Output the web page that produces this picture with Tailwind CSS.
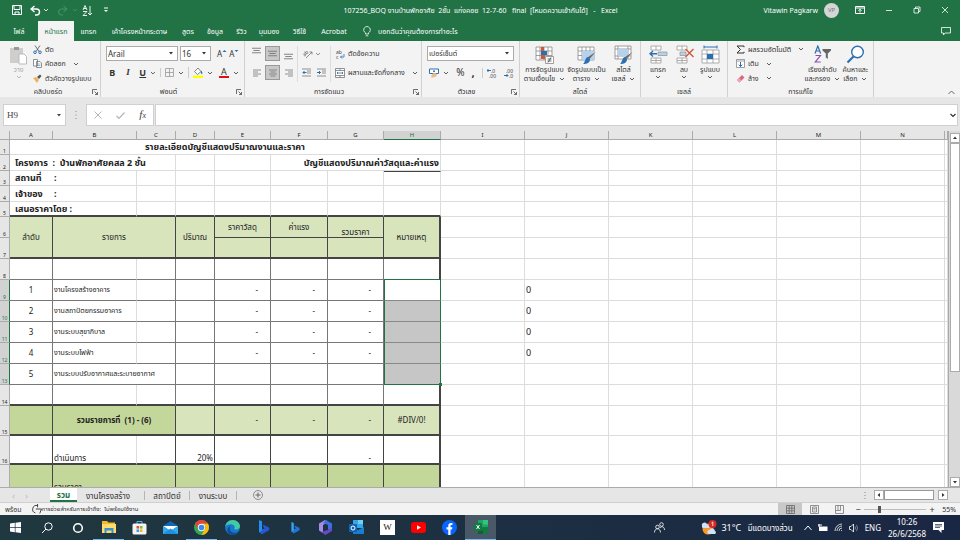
<!DOCTYPE html>
<html lang="th">

<head>
    <meta charset="UTF-8">
    <meta name="viewport" content="width=device-width, initial-scale=1.0">
    <title>107256_BOQ - Excel</title>
    <script src="https://cdn.jsdelivr.net/npm/@tailwindcss/browser@4"></script>
</head>

<body class="flex h-screen flex-col overflow-hidden bg-[#e6e6e6] font-['Noto_Sans','Noto_Sans_Thai',sans-serif] text-[7px] leading-[9px] text-[#333]">
    <!-- shared symbols -->
    <svg class="hidden">
        <symbol id="chev" viewBox="0 0 6 6"><path d="M1 2l2 2 2-2" fill="none" stroke="currentColor" stroke-width=".8" /></symbol>
        <symbol id="down" viewBox="0 0 6 6"><path d="M1 2h4L3 4.500z" fill="currentColor" /></symbol>
        <symbol id="launch" viewBox="0 0 6 6"><path d="M.5 5V.5H5M2.500 2.500l3 3M5.500 3v2.500H3" fill="none" stroke="currentColor" stroke-width=".7" /></symbol>
        <symbol id="lines" viewBox="0 0 10 10"><path d="M0 2.500h10M1.500 5h7M0 7.500h10" fill="none" stroke="currentColor" /></symbol>
        <symbol id="grid" viewBox="0 0 18 18"><path d="M1 2h16v13H1zM1 6h16M1 10.500h16M5 2v13M9 2v13M13 2v13" fill="#fff" stroke="#888" stroke-width=".8" /></symbol>
    </svg>

    <header class="bg-[#217346] text-white">
        <div class="flex h-5 items-center">
            <div class="flex flex-1 items-center gap-1 pl-3">
                <button aria-label="บันทึก"><svg class="size-[10px]" viewBox="0 0 10 10"><path d="M.5.500h9v9h-9zM2 .5v4h6v-4M3 9.500V7h4v2.500" fill="none" stroke="#fff" /></svg></button>
                <button class="ml-1 flex items-center gap-0.5" aria-label="เลิกทำ"><svg class="size-[11px]" viewBox="0 0 11 11"><path d="M4.500 1L1 4l3.500 3M1.500 4h5a3 3 0 010 6H5" fill="none" stroke="#fff" stroke-width="1.400" /></svg><svg class="size-[6px]"><use href="#chev" /></svg></button>
                <button class="ml-1 flex items-center gap-1 text-[#4f9270]" aria-label="ทำซ้ำ"><svg class="size-[11px]" viewBox="0 0 11 11"><path d="M6.500 1L10 4 6.500 7M9.500 4h-5a3 3 0 000 6H6" fill="none" stroke="currentColor" /></svg><svg class="size-[6px]"><use href="#chev" /></svg></button>
                <button class="flex items-center" aria-label="เรียงลำดับ"><svg class="size-[11px]" viewBox="0 0 11 11"><path d="M1 5l2-4.500L5 5M1.800 3.500h2.400M1 6.500h4l-4 4h4M8 1v9M6 8l2 2 2-2" fill="none" stroke="#fff" stroke-width=".9" /></svg></button>
                <button class="ml-1.5" aria-label="กำหนดเอง"><svg class="size-[6px]" viewBox="0 0 6 6"><path d="M1 1h4" stroke="#fff" /><path d="M1 3h4L3 5z" fill="#fff" /></svg></button>
            </div>
            <h1 class="whitespace-pre">107256_BOQ งานบ้านพักอาศัย  2ชั้น  แก่งคอย  12-7-60   final  [โหมดความเข้ากันได้]   -   Excel</h1>
            <div class="flex flex-1 items-center justify-end pr-[11px]">
                <span>Vitawin Pagkarw</span>
                <span class="ml-1.5 flex size-[15px] items-center justify-center rounded-full bg-[#d5d5d5] text-[6px] text-[#777]">VP</span>
                <button class="ml-4" aria-label="ตัวเลือกการแสดง Ribbon"><svg class="size-[10px]" viewBox="0 0 10 10"><path d="M.5 1.500h9v7h-9zM.5 3h9M5 7.500V4.300M3.500 5.700L5 4.200l1.500 1.500" fill="none" stroke="#fff" /></svg></button>
                <button class="ml-5" aria-label="ย่อ"><svg class="size-[8px]" viewBox="0 0 8 8"><path d="M1 4.500h6" stroke="#fff" stroke-width=".8" /></svg></button>
                <button class="ml-5" aria-label="คืนค่า"><svg class="size-[8px]" viewBox="0 0 8 8"><path d="M1 2.500h4.500V7H1zM2.500 2.500V1H7v4.500H5.500" fill="none" stroke="#fff" stroke-width=".8" /></svg></button>
                <button class="ml-5" aria-label="ปิด"><svg class="size-[8px]" viewBox="0 0 8 8"><path d="M1 1l6 6M7 1L1 7" stroke="#fff" stroke-width=".8" /></svg></button>
            </div>
        </div>
        <nav class="flex h-[21px] items-center pt-px">
            <a href="#" class="w-[38px] text-center">ไฟล์</a>
            <a href="#" class="flex h-full w-9 items-center justify-center bg-[#f3f3f3] text-[#217346]">หน้าแรก</a>
            <a href="#" class="w-[29px] text-center">แทรก</a>
            <a href="#" class="w-[73px] text-center">เค้าโครงหน้ากระดาษ</a>
            <a href="#" class="w-6 text-center">สูตร</a>
            <a href="#" class="w-[30px] text-center">ข้อมูล</a>
            <a href="#" class="w-[23px] text-center">รีวิว</a>
            <a href="#" class="w-8 text-center">มุมมอง</a>
            <a href="#" class="w-[29px] text-center">วิธีใช้</a>
            <a href="#" class="w-10 text-center">Acrobat</a>
            <a href="#" class="ml-2 flex items-center gap-1.5"><svg class="h-[11px] w-[10px]" viewBox="0 0 10 11"><path d="M3.500 8V6.800a3.300 3.300 0 113 0V8zM3.700 9.800h2.600" fill="none" stroke="#fff" stroke-width=".8" /></svg>บอกฉันว่าคุณต้องการทำอะไร</a>
            <button class="mr-[9px] ml-auto" aria-label="ข้อคิดเห็น"><svg class="size-[10px]" viewBox="0 0 10 10"><path d="M.5 1.500h9V7H4L2.500 9V7h-2z" fill="none" stroke="#fff" stroke-width=".8" /></svg></button>
        </nav>
    </header>

    <section class="flex h-14 bg-[#f3f3f3]">
        <!-- clipboard -->
        <div class="flex w-[101px] flex-col border-r border-[#d0d0d0]">
            <div class="flex flex-1 pt-px">
                <button class="flex w-[33px] flex-col items-center pl-1 text-[#aaa]">
                    <svg class="mt-1 h-[19px] w-[17px]" viewBox="0 0 17 19"><path d="M0 2h13v15H0z" fill="#d0cdcd" /><path d="M4 1h5v3H4z" fill="#999" /><path d="M9 8h5l2.500 2.500V18H9z" fill="#fff" stroke="#bbb" /></svg>
                    วาง
                    <svg class="size-[6px]"><use href="#chev" /></svg>
                </button>
                <div class="flex flex-col whitespace-nowrap">
                    <button class="flex h-[14px] items-center gap-[3px]"><svg class="size-[9px]" viewBox="0 0 9 9"><path d="M2 .5l4 6M7 .5l-4 6" stroke="#555" stroke-width=".8" /><circle cx="2" cy="7.300" r="1.300" fill="none" stroke="#2b6fb3" /><circle cx="7" cy="7.300" r="1.300" fill="none" stroke="#2b6fb3" /></svg>ตัด</button>
                    <button class="flex h-[15px] items-center gap-[3px]"><svg class="size-[9px]" viewBox="0 0 9 9"><path d="M.5.500h4V7h-4zM3.500 2.500H7l1.500 1.500v4.500h-5z" fill="#fff" stroke="#777" stroke-width=".8" /><path d="M4.500 5h3M4.500 6.500h3" stroke="#4a8bc9" stroke-width=".6" /></svg>คัดลอก<svg class="ml-1 size-[6px]"><use href="#chev" /></svg></button>
                    <button class="flex h-[14px] items-center gap-[3px]"><svg class="size-[9px]" viewBox="0 0 9 9"><path d="M0 4l3-1 3 3-2 3z" fill="#eeb362" /><path d="M4 3l3-2.500L8.500 2 6 5z" fill="#555" /></svg>ตัวคัดวางรูปแบบ</button>
                </div>
            </div>
            <div class="flex h-[11px] items-center"><span class="flex-1 pl-1 text-center">คลิปบอร์ด</span><svg class="mr-0.5 size-[6px]"><use href="#launch" /></svg></div>
        </div>
        <!-- font -->
        <div class="flex w-36 flex-col border-r border-[#d0d0d0]">
            <div class="flex flex-1 flex-col gap-1 px-[5px] pt-[5px]">
                <div class="flex h-[15px] items-center gap-0.5 text-[8px]">
                    <div class="relative"><select aria-label="ฟอนต์" class="h-[15px] w-[72px] appearance-none border border-[#ababab] bg-white pl-px"><option>Arail</option></select><svg class="absolute top-1 right-1 size-[6px]"><use href="#down" /></svg></div>
                    <div class="relative"><select aria-label="ขนาดฟอนต์" class="h-[15px] w-[31px] appearance-none border border-[#ababab] bg-white pl-px"><option>16</option></select><svg class="absolute top-1 right-1 size-[6px]"><use href="#down" /></svg></div>
                    <button class="ml-1 flex w-[12px]" aria-label="เพิ่มขนาดฟอนต์">A<svg class="size-[5px] text-[#2b6fb3]" viewBox="0 0 5 5"><path d="M.5 3l2-2 2 2z" fill="currentColor" /></svg></button>
                    <button class="flex w-[12px]" aria-label="ลดขนาดฟอนต์">A<svg class="size-[5px] text-[#2b6fb3]" viewBox="0 0 5 5"><path d="M.5 1h4l-2 2z" fill="currentColor" /></svg></button>
                </div>
                <div class="flex h-[15px] items-center text-[9px]">
                    <button class="w-[15px] pr-0.5 font-bold">B</button>
                    <button class="w-[15px] font-['Liberation_Serif'] font-bold italic">I</button>
                    <button class="w-[15px] font-bold underline">U</button>
                    <svg class="mr-1 size-[6px]"><use href="#chev" /></svg>
                    <button class="flex items-center gap-1 border-l border-[#ccc] pl-1" aria-label="เส้นขอบ"><svg class="size-[9px]" viewBox="0 0 9 9"><path d="M.5.500h8v8h-8zM4.500.500v8M.5 4.500h8" fill="none" stroke="#999" stroke-width=".8" /></svg><svg class="mr-1 size-[6px]"><use href="#chev" /></svg></button>
                    <button class="flex items-center gap-1 border-l border-[#ccc] pl-1" aria-label="สีเติม"><svg class="h-[11px] w-[10px]" viewBox="0 0 10 11"><path d="M1.500 4.500L5 1l3 3.500L4.500 7.500z" fill="#fff" stroke="#666" stroke-width=".8" /><path d="M8 3.500c2 2 1.500 3.500.8 3.500S7.500 6 8 3.500z" fill="#2b6fb3" /><path d="M0 8.500h10V11H0z" fill="#ff0" /></svg><svg class="size-[6px]"><use href="#chev" /></svg></button>
                    <button class="ml-1.5 flex items-center gap-1" aria-label="สีฟอนต์"><span class="w-[10px] border-b-2 border-[#e01010] text-center leading-[9px]">A</span><svg class="size-[6px]"><use href="#chev" /></svg></button>
                </div>
            </div>
            <div class="flex h-[11px] items-center"><span class="flex-1 text-center">ฟอนต์</span><svg class="mr-0.5 size-[6px]"><use href="#launch" /></svg></div>
        </div>
        <!-- alignment -->
        <div class="flex w-[177px] flex-col border-r border-[#d0d0d0]">
            <div class="flex flex-1 pt-[5px] text-[#777]">
                <div class="flex w-[52px] flex-col gap-1 pl-1">
                    <div class="flex gap-px">
                        <button class="flex size-[15px] items-start justify-center" aria-label="จัดชิดบน"><svg class="size-[9px]"><use href="#lines" /></svg></button>
                        <button class="flex size-[15px] items-center justify-center border border-[#999] bg-[#c8c8c8]" aria-label="จัดกึ่งกลางแนวตั้ง"><svg class="size-[9px]"><use href="#lines" /></svg></button>
                        <button class="flex size-[15px] items-end justify-center" aria-label="จัดชิดล่าง"><svg class="size-[9px]"><use href="#lines" /></svg></button>
                    </div>
                    <div class="flex gap-px">
                        <button class="flex size-[15px] items-center justify-center" aria-label="จัดชิดซ้าย"><svg class="size-[8px]" viewBox="0 0 8 8"><path d="M0 1h8M0 3h5M0 5h8M0 7h5" stroke="currentColor" stroke-width=".8" /></svg></button>
                        <button class="flex size-[15px] items-center justify-center border border-[#999] bg-[#c8c8c8]" aria-label="จัดกึ่งกลาง"><svg class="size-[8px]" viewBox="0 0 8 8"><path d="M0 1h8M1.500 3h5M0 5h8M1.500 7h5" stroke="currentColor" stroke-width=".8" /></svg></button>
                        <button class="flex size-[15px] items-center justify-center" aria-label="จัดชิดขวา"><svg class="size-[8px]" viewBox="0 0 8 8"><path d="M0 1h8M3 3h5M0 5h8M3 7h5" stroke="currentColor" stroke-width=".8" /></svg></button>
                    </div>
                </div>
                <div class="mb-1 flex w-[34px] flex-col gap-1 border-x border-[#ddd] pl-1">
                    <button class="flex h-[15px] items-center gap-0.5" aria-label="การวางแนว"><svg class="size-[11px]" viewBox="0 0 11 11"><path d="M4 10l6-6M10 6.500V4H7.500" fill="none" stroke="#777" stroke-width=".8" /><text x="1" y="7" font-size="5" fill="#444" transform="rotate(-45 4 6)">ab</text></svg><svg class="size-[6px]"><use href="#chev" /></svg></button>
                    <div class="flex h-[15px] items-center gap-1.5">
                        <button aria-label="ลดการเยื้อง"><svg class="size-[9px]" viewBox="0 0 9 9"><path d="M0 1h9M5 3h4M5 5h4M0 8h9" stroke="#777" stroke-width=".8" /><path d="M4.500 4.500H1M2.500 3L1 4.500 2.500 6" fill="none" stroke="#2b6fb3" /></svg></button>
                        <button aria-label="เพิ่มการเยื้อง"><svg class="size-[9px]" viewBox="0 0 9 9"><path d="M0 1h9M5 3h4M5 5h4M0 8h9" stroke="#777" stroke-width=".8" /><path d="M0 4.500h3.500M2 3l1.500 1.500L2 6" fill="none" stroke="#2b6fb3" /></svg></button>
                    </div>
                </div>
                <div class="flex flex-col gap-1 pl-1 whitespace-nowrap text-[#333]">
                    <button class="flex h-[15px] items-center gap-[3px]"><svg class="size-[10px]" viewBox="0 0 10 10"><text x="1" y="4.500" font-size="5" fill="#444">ab</text><text x="1" y="9.500" font-size="5" fill="#444">c</text><path d="M9 5v3H5.500M7 6.500L5.500 8 7 9.500" fill="none" stroke="#2b6fb3" stroke-width=".8" /></svg>ตัดข้อความ</button>
                    <button class="flex h-[15px] items-center gap-[3px]"><svg class="size-[10px]" viewBox="0 0 10 10"><path d="M.5.500h9v9h-9zM.5 2.500h9M.5 7.500h9M5 .5v2M5 7.500v2" fill="#fff" stroke="#777" stroke-width=".8" /><path d="M2 5h6M3 4L2 5l1 1M7 4l1 1-1 1" fill="none" stroke="#2b6fb3" stroke-width=".8" /></svg>ผสานและจัดกึ่งกลาง<svg class="ml-1 size-[6px]"><use href="#chev" /></svg></button>
                </div>
            </div>
            <div class="flex h-[11px] items-center"><span class="flex-1 text-center">การจัดแนว</span><svg class="mr-0.5 size-[6px]"><use href="#launch" /></svg></div>
        </div>
        <!-- number -->
        <div class="flex w-[98px] flex-col border-r border-[#d0d0d0]">
            <div class="flex flex-1 flex-col gap-1 px-[5px] pt-[5px]">
                <div class="relative"><select aria-label="รูปแบบตัวเลข" class="h-[15px] w-full appearance-none border border-[#ababab] bg-white pl-px"><option>เปอร์เซ็นต์</option></select><svg class="absolute top-1 right-1 size-[6px]"><use href="#down" /></svg></div>
                <div class="flex h-[15px] items-center justify-between">
                    <button class="flex items-center gap-1 pl-0.5" aria-label="สกุลเงิน"><svg class="size-[10px]" viewBox="0 0 10 10"><path d="M.5 1h9v4.500h-9z" fill="#fff" stroke="#2b6fb3" /><circle cx="5" cy="3.300" r="1" fill="#2b6fb3" /><path d="M3 6c2-2 5-1 5 .500S6 10 2 9.500z" fill="#e9bd8b" /></svg><svg class="size-[6px]"><use href="#chev" /></svg></button>
                    <button class="text-[10px]">%</button>
                    <button class="text-[11px] font-bold">,</button>
                    <button class="border-l border-[#ccc] pl-1" aria-label="เพิ่มตำแหน่งทศนิยม"><svg class="size-[10px]" viewBox="0 0 10 10"><path d="M4 2.500H0M1.500 1L0 2.500 1.500 4" fill="none" stroke="#2b6fb3" /><text x="4" y="4.500" font-size="5" fill="#444">.0</text><text x="2" y="9.500" font-size="5" fill="#444">.00</text></svg></button>
                    <button aria-label="ลดตำแหน่งทศนิยม"><svg class="size-[10px]" viewBox="0 0 10 10"><path d="M0 7.500h4M2.500 6L4 7.500 2.500 9" fill="none" stroke="#2b6fb3" /><text x="2" y="4.500" font-size="5" fill="#444">.00</text><text x="5" y="9.500" font-size="5" fill="#444">.0</text></svg></button>
                </div>
            </div>
            <div class="flex h-[11px] items-center"><span class="flex-1 text-center">ตัวเลข</span><svg class="mr-0.5 size-[6px]"><use href="#launch" /></svg></div>
        </div>
        <!-- styles -->
        <div class="flex w-[121px] flex-col border-r border-[#d0d0d0]">
            <div class="flex flex-1 items-start justify-end pt-1">
                <button class="w-[43px] text-center whitespace-nowrap"><svg class="mx-auto h-5 w-[19px]" viewBox="0 0 19 20"><use href="#grid" width="18" height="18" /><path d="M6 2h3v4H6zM6 10h4v4H6z" fill="#d0563a" /><path d="M6 6h6v4H6z" fill="#2b6fb3" /><path d="M10.500 11.500h8v7h-8z" fill="#fff" stroke="#888" stroke-width=".8" /><path d="M12.500 14h4M12.500 16h4M16 12.500l-3 5" stroke="#333" stroke-width=".7" /></svg>การจัดรูปแบบ<br><span class="flex items-center justify-center gap-1">ตามเงื่อนไข<svg class="size-[6px]"><use href="#chev" /></svg></span></button>
                <button class="w-[41px] text-center whitespace-nowrap"><svg class="mx-auto h-5 w-[19px]" viewBox="0 0 19 20"><use href="#grid" width="18" height="18" /><path d="M5 6h12v9H5z" fill="#b5d1ec" /><path d="M18.500 7l-6 7-2-1.500z" fill="#666" /><path d="M10.500 12l2.500 2c0 4-3 5-7 5 2-1 2-6 4.500-7z" fill="#2b6fb3" /></svg>จัดรูปแบบเป็น<br><span class="flex items-center justify-center gap-1">ตาราง<svg class="size-[6px]"><use href="#chev" /></svg></span></button>
                <button class="w-[33px] text-center whitespace-nowrap"><svg class="mx-auto h-5 w-[19px]" viewBox="0 0 19 20"><path d="M1 1h16v13H1zM1 4h16M1 11h16M4 1v13M14 1v13" fill="#fff" stroke="#888" stroke-width=".8" /><path d="M4 4h10v7H4z" fill="#b5d1ec" /><path d="M18.500 7l-6 7-2-1.500z" fill="#666" /><path d="M10.500 12l2.500 2c0 4-3 5-7 5 2-1 2-6 4.500-7z" fill="#2b6fb3" /></svg>สไตล์<br><span class="flex items-center justify-center gap-1">เซลล์<svg class="size-[6px]"><use href="#chev" /></svg></span></button>
            </div>
            <span class="h-[11px] text-center leading-[11px]">สไตล์</span>
        </div>
        <!-- cells -->
        <div class="flex w-[87px] flex-col border-r border-[#d0d0d0]">
            <div class="flex flex-1 items-start justify-center pt-1">
                <button class="w-[26px] text-center"><svg class="mx-auto h-5 w-[19px]" viewBox="0 0 19 20"><path d="M2 1h10v4H2zM7 1v4M2 13h10v5H2zM7 13v5M2 15.500h10" fill="#fff" stroke="#999" stroke-width=".8" /><path d="M9 7h9v3.500H9z" fill="#b5d1ec" stroke="#999" stroke-width=".8" /><path d="M8 8.700H1M4 6L1 8.700l3 2.700" fill="none" stroke="#2b6fb3" stroke-width="1.400" /></svg>แทรก<svg class="mx-auto size-[6px]"><use href="#chev" /></svg></button>
                <button class="w-[26px] text-center"><svg class="mx-auto h-5 w-[19px]" viewBox="0 0 19 20"><path d="M2 1h10v4H2zM7 1v4M2 13h10v5H2zM7 13v5M2 15.500h10" fill="#fff" stroke="#999" stroke-width=".8" /><path d="M5 7h6v3.500H5z" fill="#b5d1ec" stroke="#999" stroke-width=".8" /><path d="M10.500 4l8 8M18.500 4l-8 8" stroke="#d0563a" stroke-width="1.400" /></svg>ลบ<svg class="mx-auto size-[6px]"><use href="#chev" /></svg></button>
                <button class="w-[26px] text-center whitespace-nowrap"><svg class="mx-auto h-5 w-[19px]" viewBox="0 0 19 20"><path d="M1 5h17v13H1zM1 9h17M1 14h17M6 5v13M12 5v13" fill="#fff" stroke="#999" stroke-width=".8" /><path d="M6 9h6v5H6z" fill="#2b6fb3" /><path d="M3 2h13M3 .5v3M16 .5v3" stroke="#2b6fb3" /></svg>รูปแบบ<svg class="mx-auto size-[6px]"><use href="#chev" /></svg></button>
            </div>
            <span class="h-[11px] text-center leading-[11px]">เซลล์</span>
        </div>
        <!-- editing -->
        <div class="flex w-[146px] flex-col border-r border-[#d0d0d0]">
            <div class="flex flex-1 items-start justify-between pr-1 pl-2">
                <div class="flex flex-col pt-px whitespace-nowrap">
                    <button class="flex h-[14px] items-center gap-[3px]"><svg class="size-[9px]" viewBox="0 0 9 9"><path d="M8 2.200V1H1l3.500 3.500L1 8h7V6.800" fill="none" stroke="#333" /></svg>ผลรวมอัตโนมัติ<svg class="ml-1 size-[6px]"><use href="#chev" /></svg></button>
                    <button class="flex h-[15px] items-center gap-[3px]"><svg class="size-[9px]" viewBox="0 0 9 9"><path d="M.5.500h8v8h-8zM.5 2h8" fill="#fff" stroke="#888" stroke-width=".8" /><path d="M4.500 3v4.500M2.700 5.700l1.800 1.800 1.800-1.800" fill="none" stroke="#2b6fb3" /></svg>เติม<svg class="ml-1 size-[6px]"><use href="#chev" /></svg></button>
                    <button class="flex h-[14px] items-center gap-[3px]"><svg class="size-[9px]" viewBox="0 0 9 9"><path d="M1 6l5-5 2.500 2.500-5 5z" fill="#e0657e" /><path d="M1 6l2-2 2.500 2.500-2 2z" fill="#f2a5b4" /></svg>ล้าง<svg class="ml-1 size-[6px]"><use href="#chev" /></svg></button>
                </div>
                <div class="flex pt-1">
                    <button class="w-9 text-center whitespace-nowrap"><svg class="mx-auto h-5 w-[19px]" viewBox="0 0 19 20"><path d="M2 8.500L4.800 1l2.800 7.500M3 6h3.600" fill="none" stroke="#2b6fb3" stroke-width="1.200" /><path d="M2.500 10.500h5L2.300 17h5.400" fill="none" stroke="#8a4db0" stroke-width="1.200" /><path d="M9.500 4H18v1.500l-3.200 3V14l-2-1.500v-4l-3.300-3z" fill="#666" /></svg>เรียงลำดับ<br><span class="flex items-center justify-center gap-1">และกรอง<svg class="size-[6px]"><use href="#chev" /></svg></span></button>
                    <button class="w-[30px] text-center whitespace-nowrap"><svg class="mx-auto h-5 w-[19px]" viewBox="0 0 19 20"><circle cx="11.500" cy="7" r="5.800" fill="#fff" stroke="#2b6fb3" stroke-width="1.400" /><path d="M7.500 11.500L1.500 17.500" stroke="#2b6fb3" stroke-width="2.200" /></svg>ค้นหาและ<br><span class="flex items-center justify-center gap-1">เลือก<svg class="size-[6px]"><use href="#chev" /></svg></span></button>
                </div>
            </div>
            <span class="h-[11px] text-center leading-[11px]">การแก้ไข</span>
        </div>
        <button class="mt-auto mr-[5px] mb-px ml-auto" aria-label="ยุบ Ribbon"><svg class="size-[7px]" viewBox="0 0 7 7"><path d="M.5 5l3-3 3 3" fill="none" stroke="#444" stroke-width=".8" /></svg></button>
    </section>

    <!-- formula bar -->
    <section class="flex h-[34px] items-start pt-[7px] pr-0.5 pl-[3px] text-[#444]">
        <div class="relative"><input aria-label="กล่องชื่อ" value="H9" class="h-[22px] w-[63px] border border-[#d0d0d0] bg-white pl-[3px] font-['Liberation_Serif'] text-[9px]"><svg class="absolute top-2 right-1 size-[6px]"><use href="#down" /></svg></div>
        <svg class="mx-[8px] h-[22px] w-1" viewBox="0 0 4 22"><path d="M1.500 7h1v1h-1zM1.500 10.500h1v1h-1zM1.500 14h1v1h-1z" fill="#888" /></svg>
        <div class="flex h-[22px] w-[68px] items-center justify-around border border-[#d0d0d0] bg-white">
            <button aria-label="ยกเลิก"><svg class="size-[8px]" viewBox="0 0 8 8"><path d="M.5.500l7 7M7.500.500l-7 7" stroke="#b5b5b5" /></svg></button>
            <button aria-label="ใส่"><svg class="size-[9px]" viewBox="0 0 9 9"><path d="M.5 5l2.500 2.500L8.500 1.500" fill="none" stroke="#b5b5b5" stroke-width="1.200" /></svg></button>
            <button class="font-['Liberation_Serif'] text-[11px] italic">f<span class="text-[8px]">x</span></button>
        </div>
        <div class="relative ml-px flex-1"><input aria-label="แถบสูตร" class="h-[22px] w-full border border-[#d0d0d0] bg-white px-1"><svg class="absolute top-2 right-0.5 size-[6px]" viewBox="0 0 6 6"><path d="M.5 2L3 4.500 5.500 2" fill="none" stroke="#333" stroke-width="1.200" /></svg></div>
    </section>

    <main class="flex min-h-0 flex-1">
        <div class="min-w-0 flex-1 overflow-hidden bg-white">
            <table class="w-full table-fixed border-separate border-spacing-0 text-[8px] leading-[10px] text-[#222]">
                <colgroup>
                    <col class="w-[10px]"><col class="w-[43px]"><col class="w-[84px]"><col class="w-[39px]"><col class="w-[39px]"><col class="w-[56px]"><col class="w-[57px]"><col class="w-14"><col class="w-[57px]">
                    <col class="w-[84px]"><col class="w-[84px]"><col class="w-[84px]"><col class="w-[84px]"><col class="w-[84px]"><col class="w-[84px]"><col>
                </colgroup>
                <thead id="columns"></thead>
                <tbody id="rows"></tbody>
            </table>
        </div>
        <div class="flex w-3 flex-col items-center border-l border-[#aaa] bg-[#d9d9d9] pt-0.5">
            <button class="flex size-[10px] shrink-0 items-center justify-center border border-[#ababab] bg-white" aria-label="เลื่อนขึ้น"><svg class="size-[6px] rotate-180"><use href="#down" /></svg></button>
            <div class="h-[229px] w-[10px] border border-[#ababab] bg-white"></div>
            <button class="mt-auto flex size-[10px] shrink-0 items-center justify-center border border-[#ababab] bg-white" aria-label="เลื่อนลง"><svg class="size-[6px]"><use href="#down" /></svg></button>
        </div>
    </main>

    <!-- sheet tabs -->
    <nav class="flex h-[15px] items-center border-t border-[#ababab] pr-3 text-[8px]">
        <button class="w-[19px] pl-2 text-[#b5b5b5]" aria-label="แผ่นงานก่อนหน้า">‹</button>
        <button class="mr-4 w-[15px] text-[#b5b5b5]" aria-label="แผ่นงานถัดไป">›</button>
        <a href="#" class="flex h-full w-[27px] items-center justify-center border-b-2 border-[#217346] bg-white font-bold text-[#217346]">รวม</a>
        <a href="#" class="w-[68px] border-r border-[#b5b5b5] pl-[9px]">งานโครงสร้าง</a>
        <a href="#" class="w-[45px] border-r border-[#b5b5b5] text-center">สถาปัตย์</a>
        <a href="#" class="w-[47px] border-r border-[#b5b5b5] text-center">งานระบบ</a>
        <button class="ml-4" aria-label="แผ่นงานใหม่"><svg class="size-[10px]" viewBox="0 0 10 10"><path d="M5 2.500v5M2.500 5h5" stroke="#666" /><circle cx="5" cy="5" r="4.500" fill="none" stroke="#777" stroke-width=".8" /></svg></button>
        <svg class="mr-[7px] ml-auto h-[9px] w-1" viewBox="0 0 4 9"><path d="M1.500 1h1v1h-1zM1.500 4h1v1h-1zM1.500 7h1v1h-1z" fill="#888" /></svg>
        <button class="flex size-[10px] items-center justify-center border border-[#ababab] bg-white" aria-label="เลื่อนซ้าย"><svg class="size-[6px] rotate-90"><use href="#down" /></svg></button>
        <div class="h-[10px] w-[50px] border border-[#999] bg-white"></div>
        <button class="ml-1 flex size-[10px] items-center justify-center border border-[#ababab] bg-white" aria-label="เลื่อนขวา"><svg class="size-[6px] -rotate-90"><use href="#down" /></svg></button>
    </nav>

    <!-- status bar -->
    <section class="flex h-[13px] items-center border-t border-[#d0d0d0] bg-[#f3f3f3] pr-1 pl-[5px]">
        <span>พร้อม</span>
        <svg class="ml-2.5 size-[10px]" viewBox="0 0 9 9"><path d="M5 1.500A3.300 3.300 0 103 8M5 0v3M3.500 4.500h5L7 8.500" fill="none" stroke="#444" stroke-width=".9" /></svg>
        <span class="text-[6px]">การช่วยสำหรับการเข้าถึง:&nbsp; ไม่พร้อมใช้งาน</span>
        <button class="ml-auto flex h-full w-6 items-center justify-center bg-[#c8c8c8]" aria-label="ปกติ"><svg class="size-[9px]" viewBox="0 0 9 9"><path d="M.5.500h8v8h-8zM.5 3.200h8M.5 5.800h8M3.200.500v8M5.800.500v8" fill="none" stroke="#666" stroke-width=".8" /></svg></button>
        <button class="flex w-[25px] justify-center" aria-label="เค้าโครงหน้ากระดาษ"><svg class="size-[9px]" viewBox="0 0 9 9"><path d="M.5.500h8v8h-8zM2.500 2h4v5h-4zM3.500 3.500h2M3.500 5h2" fill="none" stroke="#777" stroke-width=".8" /></svg></button>
        <button class="flex w-[25px] justify-center" aria-label="แสดงตัวอย่างตัวแบ่งหน้า"><svg class="size-[9px]" viewBox="0 0 9 9"><path d="M.5.500h8v8h-8zM.5 5.500h5v-5M3 .5v5" fill="none" stroke="#777" stroke-width=".8" /></svg></button>
        <button class="w-[12px] text-[9px]">−</button>
        <input type="range" min="10" max="200" value="55" aria-label="ย่อ/ขยาย" class="h-[9px] w-[62px] appearance-none bg-linear-to-b from-transparent from-45% via-[#888] via-45% to-transparent to-55% [&::-webkit-slider-thumb]:h-[7px] [&::-webkit-slider-thumb]:w-[3px] [&::-webkit-slider-thumb]:appearance-none [&::-webkit-slider-thumb]:bg-[#555]">
        <button class="w-[12px] text-[9px]">+</button>
        <span class="ml-1">55%</span>
    </section>

    <!-- taskbar -->
    <footer class="flex h-[25px] items-center bg-linear-to-r from-[#20383f] to-[#1a2744] text-[8px] text-white">
        <button class="flex h-full w-[31px] items-center justify-center" aria-label="Start"><svg class="size-[11px]" viewBox="0 0 11 11"><path d="M0 1.500L4.800.800V5.200H0zM5.500.700L11 0v5.200H5.500zM0 5.900h4.800v4.400L0 9.600zM5.500 5.900H11V11l-5.500-.7z" fill="#fff" /></svg></button>
        <button class="flex h-full w-[31px] items-center justify-center" aria-label="Search"><svg class="size-[12px]" viewBox="0 0 12 12"><circle cx="7.500" cy="4.500" r="3.700" fill="none" stroke="#fff" /><path d="M5 7L1 11" stroke="#fff" /></svg></button>
        <button class="flex h-full w-[31px] items-center justify-center" aria-label="Cortana"><svg class="size-[12px]" viewBox="0 0 12 12"><circle cx="6" cy="6" r="4.300" fill="none" stroke="#fff" stroke-width="1.600" /></svg></button>
        <button class="flex h-full w-[31px] items-center justify-center border-b border-[#7ab8ee]" aria-label="File Explorer"><svg class="size-[14px]" viewBox="0 0 14 14"><path d="M0 1h5l1.500 1.500H13V13H0z" fill="#f3b92e" /><path d="M0 4h14v9H0z" fill="#ffdc6b" /><path d="M2.500 8h9v5h-2v-2.500h-5V13h-2z" fill="#3c8fd0" /></svg></button>
        <button class="flex h-full w-[31px] items-center justify-center" aria-label="Microsoft Store"><svg class="size-[15px]" viewBox="0 0 15 15"><path d="M5 4V1.500h5V4" fill="none" stroke="#55b6ee" /><rect x=".5" y="3.500" width="14" height="11" rx="1.500" fill="#f4f4f4" /><path d="M4.500 6h2.600v2.600H4.500z" fill="#e8502f" /><path d="M7.900 6h2.600v2.600H7.900z" fill="#80b93c" /><path d="M4.500 9.400h2.600V12H4.500z" fill="#2ba4e8" /><path d="M7.900 9.400h2.600V12H7.900z" fill="#f8b916" /></svg></button>
        <button class="flex h-full w-[31px] items-center justify-center" aria-label="Mail"><svg class="size-[15px]" viewBox="0 0 15 15"><path d="M0 6l7.500-5L15 6v8H0z" fill="#1067b5" /><path d="M0 6h15l-7.500 5z" fill="#fff" /><path d="M0 6l7.500 5L15 6v8H0z" fill="#31aaf0" /><path d="M0 14l7.500-5.500L15 14z" fill="#1e8fe0" /></svg></button>
        <button class="flex h-full w-[31px] items-center justify-center border-b border-[#7ab8ee]" aria-label="Chrome"><svg class="size-[15px]" viewBox="0 0 16 16"><circle cx="8" cy="8" r="8" fill="#34a853" /><path d="M1.100 4A8 8 0 0114.900 4H8a4 4 0 00-3.500 6z" fill="#ea4335" /><path d="M14.900 4A8 8 0 018 16l3.500-6A4 4 0 008 4z" fill="#fbbc05" /><circle cx="8" cy="8" r="3.900" fill="#fff" /><circle cx="8" cy="8" r="3" fill="#4285f4" /></svg></button>
        <button class="flex h-full w-[31px] items-center justify-center" aria-label="Edge"><svg class="size-[15px]" viewBox="0 0 16 16"><circle cx="8" cy="8" r="8" fill="#1678cf" /><path d="M.3 7C1 3 4 0 8 0c5 0 8 3.500 8 6.500 0 2.500-2 3.700-4 3.700-1.500 0-2.300-.6-2-1.200C11 7 9.500 4.500 6 4.500 3 4.500.8 6 .3 7z" fill="#45c9a2" /><path d="M6 6.500c-2.500 3 0 8 6 7a6.500 6.500 0 003-2c-2 4.500-8 6-11 3C1 11 3 7.500 6 6.500z" fill="#134c94" /></svg></button>
        <button class="flex h-full w-[31px] items-center justify-center" aria-label="Bing"><svg class="size-[15px]" viewBox="0 0 15 15"><path d="M3 0l3 1.200v8.500L12 7.500V10l-6 4-3-2z" fill="#2390ec" /><path d="M6.500 4.500L12.500 7a2.500 2.500 0 01.3 3.500L6 14l-2.500-2 5-3z" fill="#2756d6" /></svg></button>
        <button class="flex h-full w-[31px] items-center justify-center" aria-label="Bing Desktop"><svg class="size-[12px]" viewBox="0 0 15 15"><path d="M3 0l3 1.200v8.500L12 7.500V10l-6 4-3-2z" fill="#35a5ee" /><path d="M6.500 4.500L12.500 7a2.500 2.500 0 01.3 3.500L6 14l-2.500-2 5-3z" fill="#1d72dc" /></svg></button>
        <button class="flex h-full w-[31px] items-center justify-center" aria-label="Microsoft 365"><svg class="size-[15px]" viewBox="0 0 15 15"><path d="M7 0L1 3.500v7L5 13V5l5-3z" fill="#a58be8" /><path d="M8 0l6 3.500v5L10 10V5L5 3z" fill="#3f6ee0" /><path d="M14 8v3l-6.500 4L3 12l7-2z" fill="#6a48c4" /></svg></button>
        <button class="flex h-full w-[31px] items-center justify-center" aria-label="Outlook"><svg class="size-[15px]" viewBox="0 0 15 15"><path d="M4 0h10v8H4z" fill="#35a7ea" /><path d="M9 0h5v4H9z" fill="#6fd0f8" /><path d="M4 7l5 3 6-3v7H4z" fill="#1a7ed0" /><rect y="4" width="8" height="8" rx="1" fill="#0f62b4" /><circle cx="4" cy="8" r="2" fill="none" stroke="#fff" /></svg></button>
        <button class="flex h-full w-[31px] items-center justify-center" aria-label="Wikipedia"><span class="flex size-[15px] items-center justify-center bg-white font-['Liberation_Serif'] text-[9px] text-[#222]">W</span></button>
        <button class="flex h-full w-[31px] items-center justify-center" aria-label="YouTube"><svg class="h-[11px] w-[15px]" viewBox="0 0 15 11"><rect width="15" height="11" rx="3" fill="#f00" /><path d="M6 3.300l4 2.200-4 2.200z" fill="#fff" /></svg></button>
        <button class="flex h-full w-[31px] items-center justify-center" aria-label="Facebook"><svg class="size-[15px]" viewBox="0 0 15 15"><circle cx="7.500" cy="7.500" r="7.500" fill="#0866ff" /><path d="M6.300 15V9.500H4.500V7.200h1.800V5.800C6.300 3.800 7.400 3 9 3l1.400.1v2H9.500c-.8 0-1 .4-1 1v1.100h1.900L10 9.500H8.500V15z" fill="#fff" /></svg></button>
        <button class="flex h-full w-[31px] items-center justify-center border-b border-[#7ab8ee] bg-white/20" aria-label="Excel"><svg class="size-[14px]" viewBox="0 0 14 14"><path d="M4 0h10v14H4z" fill="#21a366" /><path d="M9 0h5v4.500H9z" fill="#33c481" /><path d="M4 7h10v7H4z" fill="#107c41" /><path d="M4 10h5v4H4z" fill="#185c37" /><rect y="3" width="8" height="8" rx="1" fill="#107c41" /><path d="M2.500 5l3 4M5.500 5l-3 4" stroke="#fff" /></svg></button>
        <div class="ml-auto flex h-full items-center">
            <svg class="mr-9 size-[11px]" viewBox="0 0 11 11"><circle cx="7.500" cy="2.500" r="1.800" fill="none" stroke="#fff" stroke-width=".8" /><circle cx="3.500" cy="5" r="1.800" fill="none" stroke="#fff" stroke-width=".8" /><path d="M.5 10.500c0-5 6-5 6 0M6 6c2-2.500 4.500-1 4.500 2" fill="none" stroke="#fff" stroke-width=".8" /></svg>
            <a href="#" class="flex items-center gap-1 text-[9px] text-white"><svg class="size-4" viewBox="0 0 16 16"><circle cx="7" cy="9" r="5.500" fill="#f7982b" /><path d="M1 6a2.500 2.500 0 015-1.500A2 2 0 018 8H2a1.500 1.500 0 01-1-2zM8 14a2 2 0 01.5-4 3 3 0 015.500 1 1.700 1.700 0 010 3z" fill="#cfe2fa" /><circle cx="11.500" cy="4" r="4" fill="#d42c23" /><path d="M10.500 3l1.300-1v4" fill="none" stroke="#fff" stroke-width=".8" /></svg>31°C&nbsp; <span class="text-[8px]">มีแดดบางส่วน</span></a>
            <svg class="ml-[11px] size-[8px]" viewBox="0 0 8 8"><path d="M.5 6L4 2l3.500 4" fill="none" stroke="#fff" /></svg>
            <svg class="ml-1.5 size-[10px]" viewBox="0 0 10 10"><path d="M1 3.500h8.500V8H1z" fill="#fff" /><path d="M0 2h4M1 1v3" stroke="#fff" /></svg>
            <svg class="ml-1.5 size-[9px]" viewBox="0 0 9 9"><path d="M1 8a7 7 0 017-7M3 8a5 5 0 015-5M5 8a3 3 0 013-3M7 8l1-1" fill="none" stroke="#ddd" stroke-width=".9" /></svg>
            <svg class="ml-1.5 size-[10px]" viewBox="0 0 10 10"><path d="M.5 3.500H2L4.500 1v8L2 6.500H.5z" fill="none" stroke="#fff" stroke-width=".8" /><path d="M6 3.500q1 1.500 0 3M7.500 2q2 3 0 6" fill="none" stroke="#999" stroke-width=".8" /></svg>
            <span class="ml-1.5">ENG</span>
            <div class="mx-[7px] text-center leading-[12px]">10:26<br>26/6/2568</div>
            <button class="mr-4" aria-label="การแจ้งเตือน"><svg class="size-[11px]" viewBox="0 0 11 11"><path d="M0 0h11v8H8.500v3l-3-3H0z" fill="#fff" /><path d="M2 2.500h7M2 4h7M2 5.500h5" stroke="#1a2744" stroke-width=".7" /></svg></button>
        </div>
    </footer>

    <script>
        const light = 'border-b border-r border-[#dcdcdc] px-px ';
        const blank = '<td class="border-r border-b border-[#dcdcdc]"></td>';
        const dark = 'border-b border-r border-[#777] px-px ';
        const soft = 'border-b border-b-[#777] border-r border-r-[#dcdcdc] px-px ';
        const head = 'border-b-2 border-r border-[#444] bg-[#d8e4bc] text-center ';
        const mid = 'border-b-2 border-r border-[#444] bg-[#d8e4bc] ';
        const deep = 'border-b-2 border-r border-[#444] bg-[#c4d79b] ';
        const title = 'text-[9px] font-bold whitespace-pre ';

        function td(cls, text = '', attrs = '') {
            return `<td class="${cls}" ${attrs}>${text}</td>`;
        }

        const amounts = (cls, e = '-', f = '-', g = '-') =>
            [e, f, g].map(v => td(cls + 'pr-3 text-right', v)).join('');

        function item(no, name, last, spill) {
            return td(dark + 'text-center', no)
                + (spill ? td(dark + 'text-[7px] whitespace-nowrap', name, 'colspan="2"') : td(soft + 'text-[7px] whitespace-nowrap', name) + td(dark))
                + td(dark)
                + (spill ? amounts(dark, '', '', '') : amounts(dark))
                + last;
        }

        const selected = 'border-x border-x-[#217346] bg-[#c6c6c6] border-b border-b-[#888]';
        const zero = blank + td(light + 'text-[9px]', '0') + blank.repeat(5);

        // one entry per sheet row: height, cells A-H, cells from I on
        const rows = [
            ['h-[15px]', td(light + title + 'text-center', 'รายละเอียดบัญชีแสดงปริมาณงานและราคา', 'colspan="8"')],
            ['h-4', td(light + title + 'pl-[5px]', 'โครงการ  :  บ้านพักอาศัยคสล 2 ชั้น', 'colspan="3"') + blank + blank + td(light + title + 'text-right', 'บัญชีแสดงปริมาณค่าวัสดุและค่าแรง', 'colspan="3"')],
            ['h-[15px]', td(light + title + 'pl-[5px]', '<span class="inline-block w-[39px]">สถานที่</span>:', 'colspan="2"') + blank.repeat(5) + td(light + 'border-t border-t-[#444]')],
            ['h-4', td(light + title + 'pl-[5px]', '<span class="inline-block w-[39px]">เจ้าของ</span>:', 'colspan="2"') + blank.repeat(6)],
            ['h-[15px]', td('border-r border-b-2 border-r-[#dcdcdc] border-b-[#444] pl-[5px] ' + title, 'เสนอราคาโดย :', 'colspan="2"') + td('border-r border-b-2 border-r-[#dcdcdc] border-b-[#444]').repeat(6)],
            ['h-[21px]', td(head, 'ลำดับ', 'rowspan="2"') + td(head, 'รายการ', 'rowspan="2" colspan="2"') + td(head, 'ปริมาณ', 'rowspan="2"')
                + td('border-r border-b border-[#444] bg-[#d8e4bc] text-center', 'ราคาวัสดุ') + td('border-r border-b border-[#444] bg-[#d8e4bc] text-center', 'ค่าแรง')
                + td('border-r border-b border-[#444] bg-[#d8e4bc] text-center align-bottom', 'รวมราคา')
                + td('border-r-2 border-b-2 border-[#444] bg-[#d8e4bc] text-center', 'หมายเหตุ', 'rowspan="2"')],
            ['h-[21px]', td(head) + td(head) + td(head)],
            ['h-[21px]', td(dark) + td(soft) + td(dark).repeat(5) + td('border-r-2 border-b border-r-[#444] border-b-[#217346]')],
            ['h-[21px]', item('1', 'งานโครงสร้างอาคาร', td('border-x border-b border-x-[#217346] border-b-[#888]')), zero],
            ['h-[21px]', item('2', 'งานสถาปัตยกรรมอาคาร', td(selected)), zero],
            ['h-[21px]', item('3', 'งานระบบสุขาภิบาล', td(selected)), zero],
            ['h-[21px]', item('4', 'งานระบบไฟฟ้า', td(selected)), zero],
            ['h-[21px]', item('5', 'งานระบบปรับอากาศและระบายอากาศ', td('relative border-x border-b border-[#217346] bg-[#c6c6c6]', '<span class="absolute -right-0.5 -bottom-0.5 size-[3px] bg-[#217346]"></span>'), true)],
            ['h-[21px]', td('border-r border-b-2 border-r-[#777] border-b-[#444]') + td('border-r border-b-2 border-r-[#dcdcdc] border-b-[#444]') + td('border-r border-b-2 border-r-[#777] border-b-[#444]').repeat(5) + td('border-r-2 border-b-2 border-[#444]')],
            ['h-[30px]', td(deep) + td(deep + 'text-center font-bold whitespace-pre', 'รวมรายการที่  (1) - (6)', 'colspan="2"') + td(mid) + amounts(mid) + td('border-r-2 border-b-2 border-[#444] bg-[#d8e4bc] text-center', '#DIV/0!')],
            ['h-[29px]', td('border-r border-b-2 border-[#444]') + td('border-r border-b-2 border-r-[#dcdcdc] border-b-[#444] px-px align-bottom', 'ดำเนินการ') + td('border-r border-b-2 border-[#444]')
                + td('border-r border-b-2 border-[#444] px-px text-right align-bottom', '20%') + td('border-r border-b-2 border-[#444]').repeat(2)
                + td('border-r border-b-2 border-[#444] pr-3 text-right align-bottom', '-') + td('border-r-2 border-b-2 border-[#444]')],
            ['h-[42px]', td(deep) + td(deep + 'px-px pt-1', 'รวมราคา', 'colspan="2"') + td(deep).repeat(4) + td('border-r-2 border-b-2 border-[#444] bg-[#c4d79b]')],
        ];

        document.getElementById('columns').innerHTML = '<tr class="h-[9px] text-[6px] leading-[8px]">' + ['', ...'ABCDEFGHIJKLMN', ''].map(c =>
            `<th scope="col" class="${c === 'H' ? 'border-r border-b border-r-[#ababab] border-b-[#217346] bg-[#d2d2d2] font-normal text-[#217346]' : 'border-r border-b border-[#ababab] bg-[#e6e6e6] font-normal'}">${c}</th>`).join('') + '</tr>';

        document.getElementById('rows').innerHTML = rows.map(([height, cells, rest], i) => {
            const on = i >= 8 && i <= 12;
            return `<tr class="${height}"><th scope="row" class="${on ? 'border-r border-b border-r-[#217346] border-b-[#ababab] bg-[#d2d2d2] align-bottom text-[5px] leading-[6px] font-normal text-[#217346]' : 'border-r border-b border-[#ababab] bg-[#e6e6e6] align-bottom text-[5px] leading-[6px] font-normal'}">${i + 1}</th>${cells}${rest || blank.repeat(7)}</tr>`;
        }).join('');
    </script>
</body>

</html>
